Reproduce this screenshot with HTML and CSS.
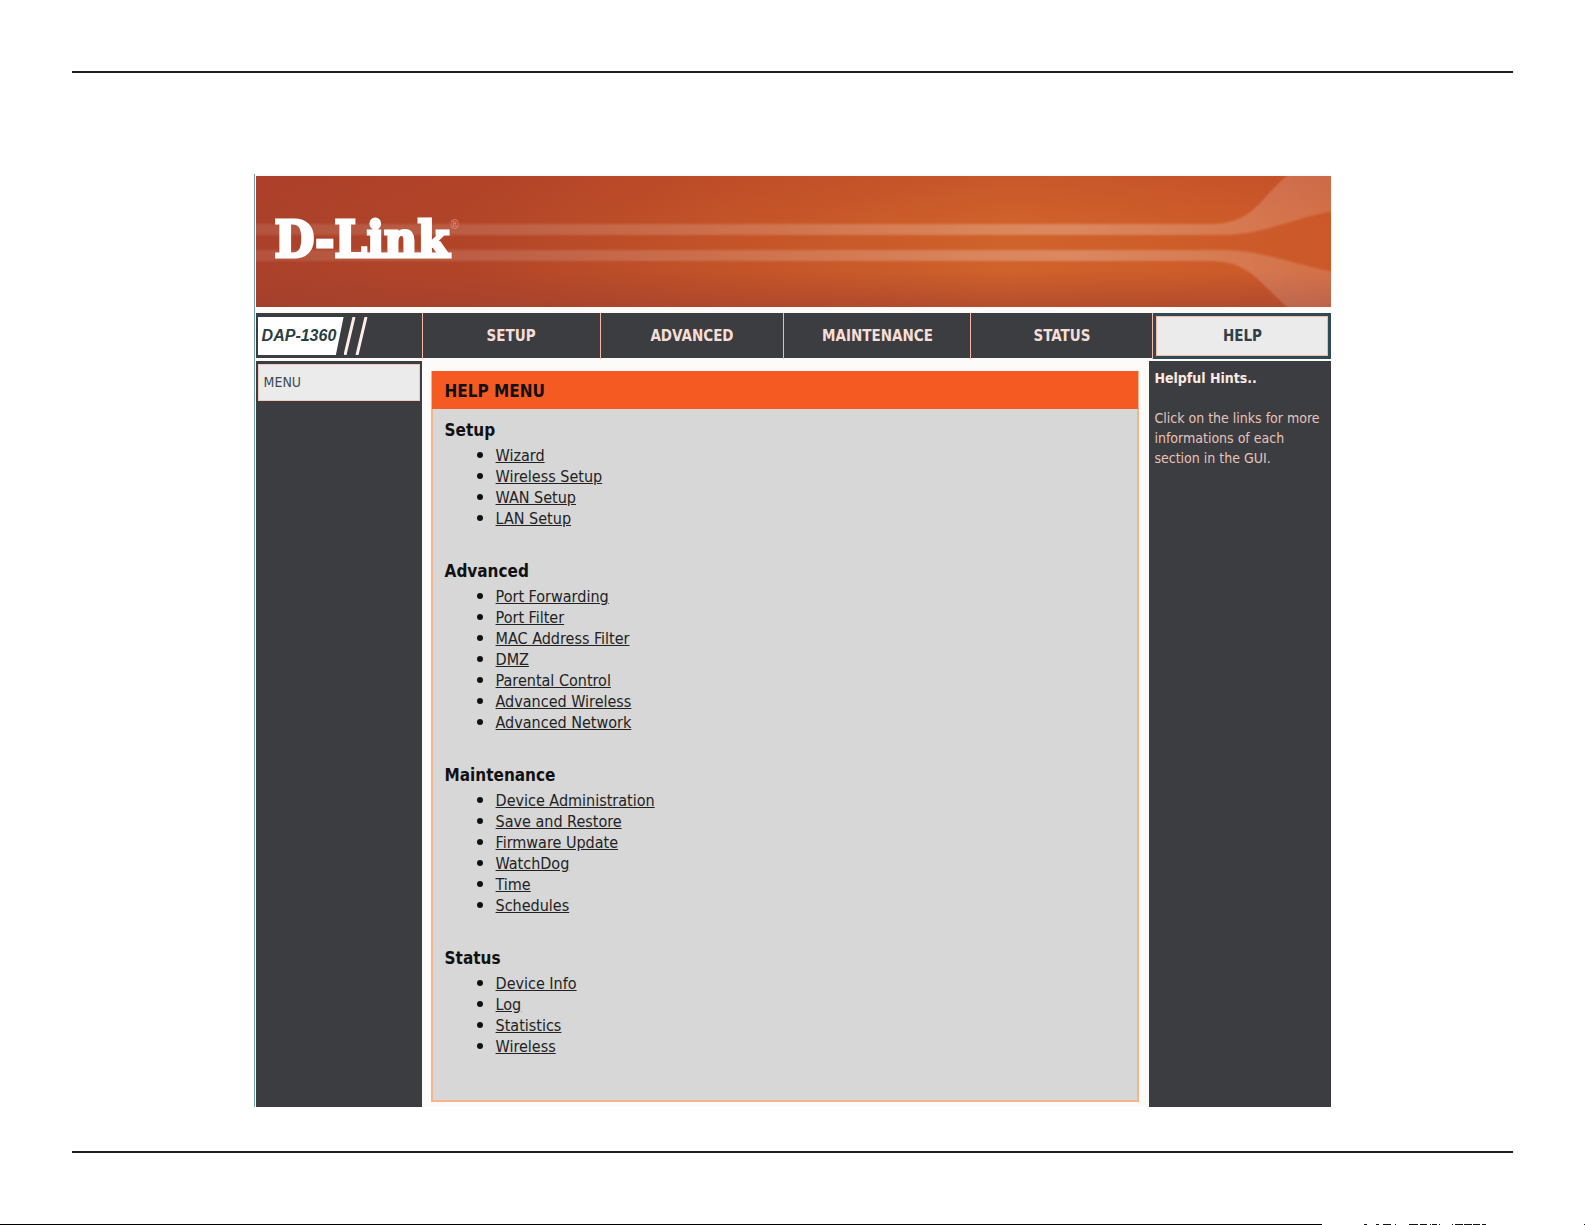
FILE: index.html
```
<!DOCTYPE html>
<html lang="en">
<head>
  <meta charset="UTF-8">
  <meta name="viewport" content="width=device-width, initial-scale=1.0">
  <title>DAP-1360 Help Menu</title>
  <link rel="stylesheet" href="styles.css">
</head>
<body>
  <hr class="rule">

  <div class="device">
    <header class="banner">
      <svg class="banner-art" viewBox="0 0 1076 131" preserveAspectRatio="none" aria-hidden="true">
        <defs>
          <linearGradient id="base" x1="0" y1="0" x2="1" y2="0">
            <stop offset="0" stop-color="#ab412a"/>
            <stop offset="0.2" stop-color="#b24528"/>
            <stop offset="0.45" stop-color="#c45428"/>
            <stop offset="0.7" stop-color="#d0622b"/>
            <stop offset="1" stop-color="#cc5829"/>
          </linearGradient>
          <linearGradient id="shade" x1="0" y1="0" x2="0" y2="1">
            <stop offset="0" stop-color="#b03a28" stop-opacity="0.25"/>
            <stop offset="0.35" stop-color="#b03a28" stop-opacity="0"/>
            <stop offset="0.72" stop-color="#a04030" stop-opacity="0"/>
            <stop offset="1" stop-color="#a04030" stop-opacity="0.6"/>
          </linearGradient>
          <linearGradient id="stripe" x1="0" y1="0" x2="1" y2="0">
            <stop offset="0" stop-color="#fff" stop-opacity="0.1"/>
            <stop offset="0.45" stop-color="#fff" stop-opacity="0.17"/>
            <stop offset="0.75" stop-color="#fff" stop-opacity="0.25"/>
            <stop offset="1" stop-color="#fff" stop-opacity="0.14"/>
          </linearGradient>
          <filter id="soft"><feGaussianBlur stdDeviation="0.5 1.2"/></filter>
        </defs>
        <rect width="1076" height="131" fill="url(#base)"/>
        <rect width="1076" height="131" fill="url(#shade)"/>
        <g fill="url(#stripe)" filter="url(#soft)">
          <path d="M-9 48H955C998 48 1004 22 1034 -3H1085V34C1040 40 1010 59 965 59H-9Z"/>
          <path d="M-9 74H965C1010 74 1040 90 1085 97V134H1035C1004 108 994 85 955 85H-9Z"/>
        </g>
      </svg>
      <div class="logo">D-Link<sup>®</sup></div>
    </header>

    <nav class="tabs">
      <div class="model">
        <span class="model-name">DAP-1360</span>
        <svg class="slashes" width="26" height="38" viewBox="0 0 26 38" aria-hidden="true">
          <path d="M1 38L10 0M13 38L22 0" stroke="#fdeee8" stroke-width="3"/>
        </svg>
      </div>
      <a href="#">SETUP</a>
      <a href="#">ADVANCED</a>
      <a href="#">MAINTENANCE</a>
      <a href="#">STATUS</a>
      <a href="#" class="active"><span>HELP</span></a>
    </nav>

    <div class="columns">
      <aside class="sidebar">
        <a href="#">MENU</a>
      </aside>

      <main class="content">
        <div class="panel">
          <h1>HELP MENU</h1>
          <div class="panel-body">
            <h2>Setup</h2>
            <ul>
              <li><a href="#">Wizard</a></li>
              <li><a href="#">Wireless Setup</a></li>
              <li><a href="#">WAN Setup</a></li>
              <li><a href="#">LAN Setup</a></li>
            </ul>
            <h2>Advanced</h2>
            <ul>
              <li><a href="#">Port Forwarding</a></li>
              <li><a href="#">Port Filter</a></li>
              <li><a href="#">MAC Address Filter</a></li>
              <li><a href="#">DMZ</a></li>
              <li><a href="#">Parental Control</a></li>
              <li><a href="#">Advanced Wireless</a></li>
              <li><a href="#">Advanced Network</a></li>
            </ul>
            <h2>Maintenance</h2>
            <ul>
              <li><a href="#">Device Administration</a></li>
              <li><a href="#">Save and Restore</a></li>
              <li><a href="#">Firmware Update</a></li>
              <li><a href="#">WatchDog</a></li>
              <li><a href="#">Time</a></li>
              <li><a href="#">Schedules</a></li>
            </ul>
            <h2>Status</h2>
            <ul>
              <li><a href="#">Device Info</a></li>
              <li><a href="#">Log</a></li>
              <li><a href="#">Statistics</a></li>
              <li><a href="#">Wireless</a></li>
            </ul>
          </div>
        </div>
      </main>

      <aside class="hints">
        <h3>Helpful Hints..</h3>
        <p>Click on the links for more informations of each section in the GUI.</p>
      </aside>
    </div>
  </div>

  <hr class="rule">

  <footer class="page-edge">
    <div class="edge-line"></div>
    <svg class="edge-marks" viewBox="0 0 263 1" preserveAspectRatio="none" aria-hidden="true">
      <path d="M42 .5h3M54 .5h3M61 .5h8M73 .5h1M87 .5h9M98 .5h7M108 .5h1M110 .5h5M117 .5h1M130 .5h1M133 .5h8M142 .5h8M151 .5h7M160 .5h4M262 .5h1" stroke="#111"/>
    </svg>
  </footer>
</body>
</html>
```
FILE: styles.css
```
* {
  box-sizing: border-box;
}
body {
  font-family: "DejaVu Sans Condensed", "DejaVu Sans", Tahoma, sans-serif;
  font-size: 16px;
  display: flex;
  flex-direction: column;
  min-height: 100vh;
  margin: 0;
  padding-top: 71px;
  background-color: #fff;
  color: #111;
}
.rule {
  width: auto;
  height: 2px;
  margin: 0 72px;
  border: none;
  background: #231f20;
}
.device {
  width: 68%;
  margin: 101px auto 44px;
  padding-top: 2px;
  border-left: 1px solid #6f9fae;
  background: #fdfbfa;
}

/* banner */
.banner {
  position: relative;
  height: 131px;
  margin-left: 1px;
  margin-bottom: 6px;
  padding: 31px 19px;
  overflow: hidden;
}
.banner-art {
  position: absolute;
  top: 0;
  left: 0;
  width: 100%;
  height: 100%;
}
.logo {
  position: relative;
  font-family: "DejaVu Serif Condensed", "DejaVu Serif", serif;
  font-size: 51px;
  font-weight: bold;
  line-height: 64px;
  color: #fff;
  -webkit-text-stroke: 3px #fff;
}
.logo sup {
  font-size: 12px;
  font-weight: normal;
  line-height: 12px;
  vertical-align: 28px;
  color: #d9907c;
  -webkit-text-stroke: 0;
}

/* tabs */
.tabs {
  display: grid;
  grid-template-columns: 166fr 178fr 184fr 187fr 182fr 179fr;
  height: 45px;
  margin-left: 1px;
  margin-bottom: 3px;
  background: #3b3d41;
}
.tabs a {
  display: flex;
  align-items: center;
  justify-content: center;
  border-left: 1px solid #f3b8a8;
  font-size: 15px;
  font-weight: bold;
  color: #f6ded6;
  text-decoration: none;
}
.tabs .active {
  align-items: stretch;
}
.tabs .active span {
  flex: 1;
  border: 3px solid #2f4a54;
  outline: 1px solid #f3b8a8;
  outline-offset: -4px;
  background: #ebebeb;
  line-height: 40px;
  text-align: center;
  color: #2f4148;
}
.model {
  display: flex;
  align-items: center;
  padding-left: 2px;
}
.model-name {
  width: 86px;
  padding-left: 4px;
  background: #fff;
  clip-path: polygon(0 0, 100% 0, 91% 100%, 0 100%);
  font-family: "Liberation Sans", Arial, sans-serif;
  font-size: 16px;
  font-style: italic;
  font-weight: bold;
  line-height: 38px;
  color: #2b3d44;
}

/* columns */
.columns {
  display: grid;
  grid-template-columns: 166fr 728fr 182fr;
  margin-left: 1px;
}
.sidebar {
  padding: 3px 2px;
  background: #3b3d41;
}
.sidebar a {
  display: block;
  padding: 0 5px;
  border: 1px solid #f3c9bd;
  background: #ebebeb;
  font-size: 14px;
  line-height: 35px;
  color: #3c4c52;
  text-decoration: none;
}
.content {
  padding: 10px 10px 5px 9px;
}
.panel {
  border: 2px solid #f5b48b;
  border-top: none;
  background: #d7d7d7;
}
.panel h1 {
  margin: 0 -1px;
  padding: 3px 13px 0;
  background: #f55a23;
  font-size: 17px;
  font-weight: bold;
  line-height: 35px;
}
.panel-body {
  padding: 8px 12px 14px;
}
.panel h2 {
  margin: 0;
  font-size: 17px;
  line-height: 27px;
}
.panel ul {
  margin: 0 0 30px;
  padding-left: 51px;
}
.panel li {
  height: 21px;
  line-height: 21px;
}
.panel li::marker {
  font-size: 20px;
}
.panel a {
  color: #222;
}
.hints {
  padding: 7px 5px;
  background: #3b3d41;
  color: #e6c4ba;
  font-size: 14px;
  line-height: 20px;
}
.hints h3 {
  margin: 0 0 20px;
  font-size: 14px;
  line-height: 20px;
  color: #fbe9e2;
}
.hints p {
  margin: 0;
}

/* bottom edge of the page */
.page-edge {
  display: flex;
  height: 1px;
  margin-top: auto;
}
.edge-line {
  flex: 1322;
  background: #000;
}
.edge-marks {
  flex: 263;
  min-width: 0;
  height: 1px;
}
```
